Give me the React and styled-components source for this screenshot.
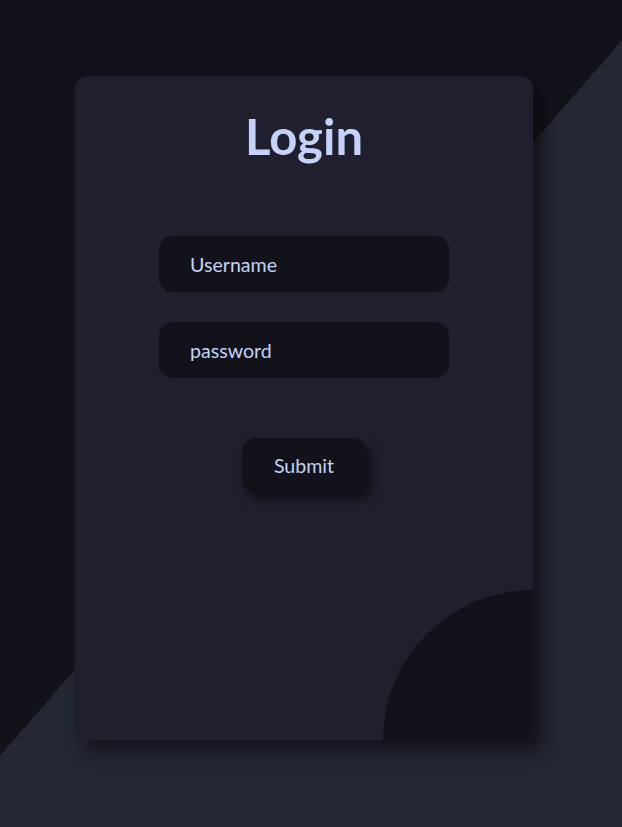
import React from 'react'
import styled, { createGlobalStyle } from 'styled-components'

const GlobalStyle = createGlobalStyle`
  html, body {
    margin: 0;
    padding: 0;
    height: 100%;
  }
  body {
    font-family: Lato, "Noto Sans", sans-serif;
    background: linear-gradient(131deg, #12121b 49%, #242734 49%);
    background-repeat: no-repeat;
    min-height: 827px;
  }
`

const Page = styled.div`
  padding: 76px 0 0 75px;
`

const Card = styled.form`
  position: relative;
  overflow: hidden;
  width: 458px;
  height: 664px;
  box-sizing: border-box;
  background: #1f1f2e;
  border-radius: 13px;
  box-shadow: 10px 12px 16px rgba(8, 8, 14, 0.6);
  display: flex;
  flex-direction: column;
  align-items: center;
  padding-top: 32px;
`

const Title = styled.h1`
  margin: 0 0 72px;
  font-size: 49px;
  font-weight: 700;
  line-height: 56px;
  color: #c5d1f7;
`

const Input = styled.input`
  width: 290px;
  height: 56px;
  box-sizing: border-box;
  border: none;
  outline: none;
  border-radius: 14px;
  background: #12121b;
  padding: 0 0 0 31px;
  margin-bottom: 30px;
  font-family: inherit;
  font-size: 19.6px;
  color: #c5d1f7;

  &::placeholder {
    color: #c5d1f7;
    opacity: 1;
  }
`

const Button = styled.button`
  margin-top: 30px;
  width: 124px;
  height: 55px;
  border: none;
  border-radius: 14px;
  background: #12121b;
  color: #c5d1f7;
  font-family: inherit;
  font-size: 19.6px;
  cursor: pointer;
  box-shadow: 6px 7px 10px rgba(6, 6, 10, 0.55);
`

const Blob = styled.div`
  position: absolute;
  right: -150px;
  bottom: -150px;
  width: 300px;
  height: 300px;
  border-radius: 50%;
  background: #12121b;
`

const App = () => {
  return (
    <Page>
      <GlobalStyle />
      <Card onSubmit={e => e.preventDefault()}>
        <Title>Login</Title>
        <Input type="text" placeholder="Username" />
        <Input type="password" placeholder="password" />
        <Button type="submit">Submit</Button>
        <Blob />
      </Card>
    </Page>
  )
}

export default App
